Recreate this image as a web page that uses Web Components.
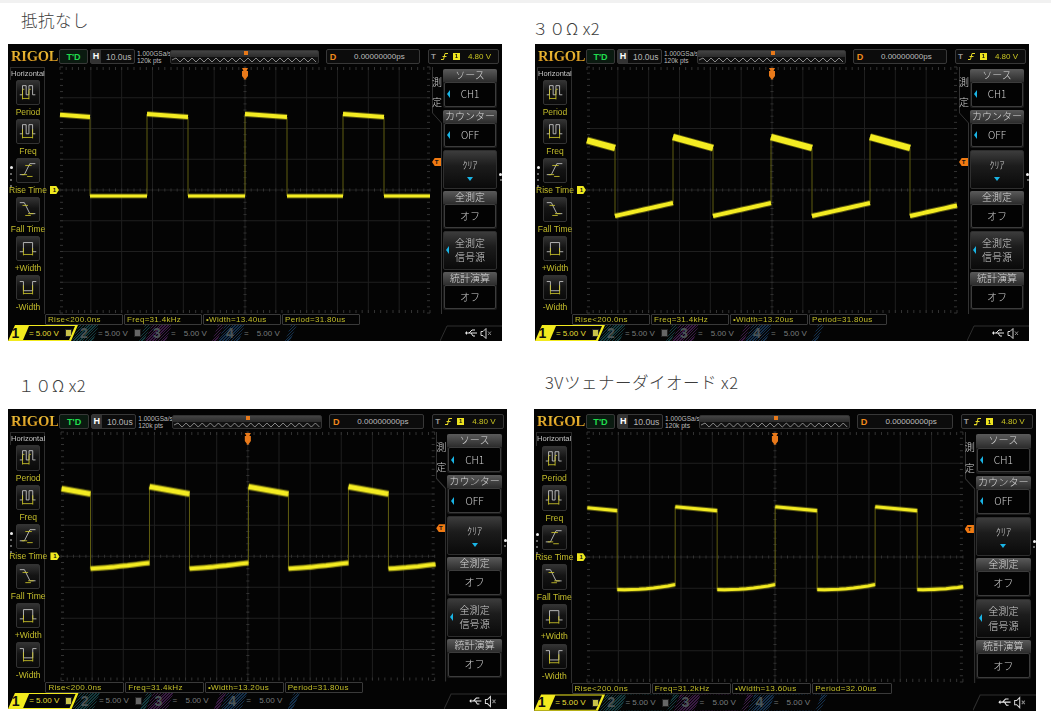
<!DOCTYPE html>
<html lang="ja">
<head>
<meta charset="utf-8">
<title>scope shots</title>
<style>
  html, body { margin: 0; background: #fff; }
  body { font-family: "Liberation Sans", "Noto Sans CJK JP", sans-serif; }
</style>
</head>
<body>
<shot-sheet>
  <scope-shot head="抵抗なし" head-x="13" head-top="7" left="8" head-h="41"
    ox="8" oy="44" z="1" freq="31.4kHz" pw="13.40us" period="31.80us"
    plot-x="60" plot-end="430" edges="90 147 188 245 287 343 384" hi="114 117 5" lo="196 196 196 4"></scope-shot>
  <scope-shot head="３０Ω x2" head-x="-3" head-top="15" left="535" head-h="41"
    ox="535" oy="44" z="1" freq="31.4kHz" pw="13.20us" period="31.80us"
    plot-x="587" plot-end="957" edges="615 673 713 771 812 870 910" hi="137 148 7" lo="216 209.500 203 5"></scope-shot>
  <scope-shot head="１０Ω x2" head-x="10" head-top="34" left="8" head-h="68"
    ox="8" oy="409" z="1.01" freq="31.4kHz" pw="13.20us" period="31.80us"
    plot-x="61" plot-end="435" edges="90 149 189 248 288 348 388" hi="487 494 6" lo="569 566.500 563 5"></scope-shot>
  <scope-shot head="3Vツェナーダイオード x2" head-x="11" head-top="31" left="534" head-h="68"
    ox="534" oy="409" z="1.016" freq="31.2kHz" pw="13.60us" period="32.00us"
    plot-x="587" plot-end="963" edges="617 675 717 775 817 875 917" hi="507 511 4" lo="590 589 585 4"></scope-shot>
</shot-sheet>

<script>
const LCD_FONT = '"Liberation Sans", "Noto Sans CJK JP", sans-serif';

class ShotSheet extends HTMLElement {
  constructor() {
    super();
    this.attachShadow({ mode: "open" });
    this.shadowRoot.innerHTML = `
      <style>
        :host {
          display: grid;
          grid-template-columns: 526px 525px;
          width: 1051px;
          height: 720px;
          box-sizing: border-box;
          align-content: start;
          border-top: 3px solid #f1f1f1;
          overflow: hidden;
        }
      </style>
      <slot></slot>`;
  }
}

class ScopeShot extends HTMLElement {
  constructor() {
    super();
    this.attachShadow({ mode: "open" });
  }

  connectedCallback() {
    const attr = (n) => this.getAttribute(n);
    const pad = Number(attr("left")) - (Number(attr("left")) > 500 ? 526 : 0);
    this.shadowRoot.innerHTML = `
      <style>
        :host { display: block; padding-left: ${pad}px; }
        .head {
          height: ${attr("head-h")}px;
          box-sizing: border-box;
          margin-left: ${attr("head-x")}px;
          padding-top: ${attr("head-top")}px;
          font: 300 16.5px/20px "Noto Sans CJK JP", sans-serif;
          letter-spacing: .5px;
          color: #3c3c3c;
          white-space: nowrap;
        }
        rigol-scope { zoom: ${attr("z")}; }
      </style>
      <div class="head">${attr("head")}</div>
      <rigol-scope></rigol-scope>`;
    const scope = this.shadowRoot.querySelector("rigol-scope");
    for (const n of ["ox", "oy", "z", "freq", "pw", "period", "plot-x", "plot-end", "edges", "hi", "lo"]) {
      scope.setAttribute(n, attr(n));
    }
  }
}

class SideKey extends HTMLElement {
  constructor() {
    super();
    this.attachShadow({ mode: "open" });
    this.shadowRoot.innerHTML = `
      <style>
        :host {
          display: flex;
          flex-direction: column;
          align-items: center;
          width: 44px;
          height: 40.2px;
          font-size: 8.5px;
          color: #c4bd2c;
          white-space: nowrap;
        }
        .btn {
          width: 24px;
          height: 25px;
          box-sizing: border-box;
          border: 1px solid #333;
          border-radius: 2px;
          background: linear-gradient(#333, #141414 45%, #0a0a0a);
          flex: none;
        }
        .lbl { line-height: 12px; margin-top: 1px; }
        ::slotted(svg) { display: block; }
      </style>
      <div class="btn"><slot name="icon"></slot></div>
      <div class="lbl"><slot></slot></div>`;
  }
}

class SoftKey extends HTMLElement {
  constructor() {
    super();
    this.attachShadow({ mode: "open" });
  }

  connectedCallback() {
    const head = this.getAttribute("head");
    const arrow = this.hasAttribute("arrow") ? `<i class="arrow"></i>` : "";
    const down = this.hasAttribute("down") ? `<i class="down"></i>` : "";
    const top = head ? `<div class="top">${head}</div>` : "";
    this.shadowRoot.innerHTML = `
      <style>
        :host {
          display: flex;
          flex-direction: column;
          height: 38.5px;
          width: 54px;
          box-sizing: border-box;
          border-radius: 2px;
          background: ${head ? "#1b1b1b" : "linear-gradient(#3c3c3c, #1c1c1c 40%, #0a0a0a)"};
          border: ${head ? "0" : "1px solid #2e2e2e"};
          color: #cfcfcf;
          font-family: "Noto Sans CJK JP", "Liberation Sans", sans-serif;
          font-weight: 300;
          flex: none;
        }
        .top {
          height: 13px;
          flex: none;
          line-height: 12px;
          font-size: 10px;
          text-align: center;
          background: linear-gradient(#5a5a5a, #2c2c2c);
          border-radius: 2px 2px 0 0;
          color: #d8d8d8;
          white-space: nowrap;
        }
        .body {
          flex: 1;
          position: relative;
          display: flex;
          align-items: center;
          justify-content: center;
          flex-direction: column;
          margin: ${head ? "0 1px 1px" : "0"};
          background: ${head ? "#030303" : "transparent"};
          border: ${head ? "1px solid #3c3c3c" : "0"};
          border-radius: 2px;
          font-size: 10px;
          line-height: 14px;
          text-align: center;
        }
        .arrow {
          position: absolute;
          left: 2px;
          top: 50%;
          margin-top: -4px;
          border: 4px solid transparent;
          border-left: 0;
          border-right: 3px solid #19b5e6;
        }
        .down {
          margin-top: 5px;
          border: 3.5px solid transparent;
          border-bottom: 0;
          border-top: 4px solid #19b5e6;
        }
      </style>
      ${top}
      <div class="body">${arrow}<span><slot></slot></span>${down}</div>`;
  }
}

class ChannelTab extends HTMLElement {
  constructor() {
    super();
    this.attachShadow({ mode: "open" });
  }

  connectedCallback() {
    const n = this.getAttribute("n");
    const tone = this.getAttribute("tone");
    const on = this.hasAttribute("on");
    this.shadowRoot.innerHTML = `
      <style>
        :host {
          display: flex;
          align-items: center;
          width: ${this.getAttribute("w")}px;
          margin-right: -6px;
          height: 16px;
          flex: none;
          box-sizing: border-box;
          clip-path: polygon(7px 0, 100% 0, calc(100% - 7px) 100%, 0 100%);
          background: ${on ? "#f2ea1e" : `repeating-linear-gradient(135deg, ${tone} 0 1px, #060606 1px 2px)`};
        }
        .num {
          width: ${on ? 15 : 18}px;
          flex: none;
          text-align: center;
          font: bold 14px/16px "Liberation Sans", sans-serif;
          color: ${on ? "#111" : "#4a5456"};
          padding-left: ${on ? 0 : 3}px;
        }
        .lcd {
          flex: 1;
          min-width: 0;
          height: ${on ? 14 : 16}px;
          margin-right: ${on ? 3 : 6}px;
          display: flex;
          align-items: center;
          gap: 2px;
          background: #050505;
          clip-path: polygon(6px 0, 100% 0, calc(100% - 6px) 100%, 0 100%);
          padding-left: ${on ? 6 : 5}px;
          font-size: 8px;
          color: ${on ? "#e6df35" : "#777b7c"};
          white-space: nowrap;
        }
        .eq { font-size: 8px; margin-right: ${n > 2 ? 6 : 0}px; }
        .bw {
          width: 5px; height: 6px; margin-left: 4px; flex: none;
          background: ${on ? "#c8c24a" : "#666"};
          border: 1px solid #222;
        }
      </style>
      <div class="num">${n}</div>
      <div class="lcd"><span class="eq">=</span><span>5.00 V</span>${n <= 2 ? '<span class="bw"></span>' : ""}</div>`;
  }
}

class ScopePlot extends HTMLElement {
  constructor() {
    super();
    this.attachShadow({ mode: "open" });
  }

  connectedCallback() {
    const num = (n) => Number(this.getAttribute(n));
    const list = (n) => this.getAttribute(n).split(" ").map(Number);
    const ox = num("ox"), oy = num("oy"), z = num("z");
    const X = (x) => ((x - ox) / z - 52).toFixed(1);
    const Y = (y) => ((y - oy) / z - 23).toFixed(1);
    const W = 370, H = 246, dx = W / 12, dy = H / 8;

    // grid and tick marks
    let grid = "";
    for (let i = 1; i < 12; i++) grid += `M${i * dx} 0V${H}`;
    for (let i = 1; i < 8; i++) grid += `M0 ${i * dy}H${W}`;
    let ticks = "";
    for (let i = 0; i <= 60; i++) {
      const x = (i * dx) / 5;
      ticks += `M${x} 0v3M${x} ${H}v-3M${x} ${H / 2 - 1.5}v3`;
    }
    for (let i = 0; i <= 40; i++) {
      const y = (i * dy) / 5;
      ticks += `M0 ${y}h3M${W} ${y}h-3M${W / 2 - 1.5} ${y}h3`;
    }

    // waveform: page coordinates, turned into plot coordinates here
    const edges = list("edges");
    const [ha, hb, ht] = list("hi");
    const [la, lm, lb, lt] = list("lo");
    const start = num("plot-x"), end = num("plot-end");
    const lowSpan = edges[1] - edges[0];
    const highSpan = edges[2] - edges[1];
    const slope = (hb - ha) / highSpan;
    const lowAt = (t) => {
      const c = 2 * (la + lb - 2 * lm);
      const b = lb - la - c;
      return la + b * t + c * t * t;
    };
    let high = `M${X(start)} ${Y(hb - slope * (edges[0] - start))}L${X(edges[0])} ${Y(hb)}`;
    let low = "";
    let vert = `M${X(edges[0])} ${Y(hb)}V${Y(la)}`;
    for (let i = 0; i < edges.length; i += 2) {
      const from = edges[i];
      const to = i + 1 < edges.length ? edges[i + 1] : end;
      const span = i + 1 < edges.length ? to - from : lowSpan;
      low += `M${X(from)} ${Y(la)}`;
      for (let s = 1; s <= 8; s++) {
        const x = from + ((to - from) * s) / 8;
        low += `L${X(x)} ${Y(lowAt((x - from) / span))}`;
      }
      if (i + 2 < edges.length) {
        high += `M${X(to)} ${Y(ha)}L${X(edges[i + 2])} ${Y(hb)}`;
        vert += `M${X(to)} ${Y(lb)}V${Y(ha)}M${X(edges[i + 2])} ${Y(hb)}V${Y(la)}`;
      }
    }

    this.shadowRoot.innerHTML = `
      <style>
        :host { display: block; width: ${W}px; height: ${H}px; flex: none; position: relative; }
        svg { display: block; overflow: visible; }
        .soft { filter: blur(.5px); }
        .tag {
          position: absolute;
          font: bold 6px/8px "Liberation Sans", sans-serif;
          height: 8px;
          width: 9px;
          text-align: center;
          color: #111;
        }
        .ch { left: -10px; top: ${H / 2 - 4}px; background: #f0e81f; clip-path: polygon(0 0, 70% 0, 100% 50%, 70% 100%, 0 100%); }
        .trig { left: ${W + 2}px; top: 91px; background: #f07a12; clip-path: polygon(30% 0, 100% 0, 100% 100%, 30% 100%, 0 50%); }
      </style>
      <svg width="${W}" height="${H}" viewBox="0 0 ${W} ${H}">
        <path d="${grid}" stroke="#1f1f1f" fill="none"/>
        <path d="${ticks}" stroke="#333" fill="none"/>
        <path d="M${W / 2 - 3} 1h6l-1.500 3h1.500v5l-3 4l-3 -4v-5h1.500z" fill="#e8791a"/>
        <path d="${vert}" stroke="#5f5c10" fill="none"/>
        <g class="soft">
          <path d="${low}" stroke="#bdb71c" stroke-width="${lt + 1}" fill="none" opacity=".45"/>
          <path d="${high}" stroke="#bdb71c" stroke-width="${ht + 1}" fill="none" opacity=".45"/>
          <path d="${low}" stroke="#f4ec22" stroke-width="${lt - 1}" fill="none"/>
          <path d="${high}" stroke="#f4ec22" stroke-width="${ht - 1}" fill="none"/>
        </g>
      </svg>
      <div class="tag ch">1</div>
      <div class="tag trig">T</div>`;
  }
}

const ICON_PATHS = {
  period: ["M3 15H6V5H10V15H13V5H17V15H20", "M6 10V20M13 10V20M6 19H13M6 9H8M13 9H15"],
  freq: ["M3 15H6V5H10V15H13V5H17V15H20", "M6 10V20M17 10V20M6 19H17"],
  rise: ["M3 17H8L14 5H20", "M5 17H11M9 7H16M11 19H17"],
  fall: ["M3 5H8L14 17H20", "M6 8H12M9 19H15M12 17H18"],
  plus: ["M3 16H7V6H17V16H21", "M7 12V20M17 12V20M7 19H17"],
  minus: ["M3 6H7V16H17V6H21", "M7 10V20M17 10V20M7 19H17"],
};
const icon = (name) => {
  const [white, yellow] = ICON_PATHS[name];
  return `<svg slot="icon" width="22" height="23" viewBox="0 0 24 25" fill="none">
    <path d="${white}" stroke="#cfcfcf" stroke-width=".9"/>
    <path d="${yellow}" stroke="#d0c82a" stroke-width=".9"/></svg>`;
};

class RigolScope extends HTMLElement {
  constructor() {
    super();
    this.attachShadow({ mode: "open" });
  }

  connectedCallback() {
    const a = (n) => this.getAttribute(n);
    const plotAttrs = ["ox", "oy", "z", "plot-x", "plot-end", "edges", "hi", "lo"]
      .map((n) => `${n}="${a(n)}"`)
      .join(" ");
    this.shadowRoot.innerHTML = `
      <style>
        :host {
          display: flex;
          flex-direction: column;
          position: relative;
          width: 494px;
          height: 297px;
          background: #040404;
          font-family: ${LCD_FONT};
          color: #ccc;
          filter: blur(.35px);
        }
        .bar { display: flex; align-items: center; height: 23px; flex: none; padding: 3px 0 1px 3px; box-sizing: border-box; }
        .logo {
          width: 47px; flex: none;
          font: bold 14.500px/15px "Liberation Serif", serif;
          letter-spacing: -.2px;
          background: linear-gradient(#f4c83c, #d08d1c);
          -webkit-background-clip: text;
          color: transparent;
          white-space: nowrap;
        }
        .box {
          display: flex; align-items: center; height: 15px; box-sizing: border-box;
          border: 1px solid #383838; border-radius: 2px; background: #0c0c0c; flex: none;
          font-size: 8px;
        }
        .td { width: 29px; margin-left: 1px; justify-content: center; color: #20dd4e; font-weight: bold; font-size: 9px; background: #0a1a10; }
        .h { width: 45px; margin-left: 2px; }
        .h b { background: #333; color: #fff; width: 10px; height: 13px; line-height: 13px; text-align: center; font-size: 9px; }
        .h span { margin-left: 5px; color: #b5b5b5; font-size: 8.500px; }
        .rate { width: 33px; margin-left: 2px; font-size: 6.5px; line-height: 7px; color: #bdbdbd; flex: none; white-space: nowrap; }
        .mem { width: 149px; height: 14px; position: relative; background: linear-gradient(#444, #2a2a2a 50%, #111 50%); border: 1px solid #333; box-sizing: border-box; border-radius: 2px; flex: none; }
        .mem svg { display: block; margin: 6px 0 0 1px; }
        .mem i { position: absolute; left: 73px; top: 0; width: 4px; height: 4px; background: #e8791a; }
        .d { width: 94px; margin-left: 7px; }
        .d b { color: #f08a1c; font-size: 9px; width: 12px; text-align: center; }
        .d span { margin-left: 15px; color: #bdbdbd; }
        .t { width: 71px; margin-left: 8px; gap: 5px; padding-left: 2px; color: #c9c422; }
        .t b { color: #9a9a9a; font-size: 8px; }
        .t em { font: bold 6px/7px "Liberation Sans", sans-serif; color: #111; background: #eee41f; width: 7px; height: 7px; text-align: center; }
        .t span { margin-left: 3px; }

        .mid { display: flex; height: 247px; flex: none; }
        .left {
          width: 52px; flex: none; display: flex; flex-direction: column;
          box-sizing: border-box; padding-left: 0;
        }
        .hz { width: 35px; margin-left: 2px; height: 13px; line-height: 11px; text-align: center; font-size: 7.5px; color: #c5c5c5; border: 1px solid #2a2a2a; border-bottom: 0; box-sizing: border-box; flex: none; white-space: nowrap; }
        .keys { display: flex; flex-direction: column; border-right: 1px solid #2e2e2e; width: 37px; height: 234px; box-sizing: border-box; }
        .keys side-key { margin-left: -2px; }
        .dots { position: absolute; left: 2px; top: 122px; display: flex; flex-direction: column; gap: 4px; }
        .dots i, .rdots i { display: block; width: 2px; height: 2px; border-radius: 50%; background: #888; }
        .dots i:first-child, .rdots i:first-child { background: #eee; width: 3px; height: 3px; }
        .right { width: 72px; flex: none; display: flex; position: relative; box-sizing: border-box; padding: 2px 0 0 13px; }
        .frame { position: absolute; left: 2px; top: 0; }
        .meas { position: absolute; left: 2px; top: 5px; width: 10px; font: 300 10px/20px "Noto Sans CJK JP", sans-serif; color: #d4d4d4; }
        .softs { display: flex; flex-direction: column; gap: 2px; }
        .rdots { position: absolute; left: 69px; top: 106px; display: flex; flex-direction: column; gap: 3px; align-items: center; }

        .measures { display: flex; height: 11px; flex: none; padding-left: 37px; gap: 1px; box-sizing: border-box; }
        .measures span {
          width: 78px; flex: none; box-sizing: border-box; border: 1px solid #3a3a3a; border-radius: 1px;
          font-size: 8px; line-height: 9px; padding-left: 2px; color: #c4bf2a; letter-spacing: .3px; white-space: nowrap;
        }
        .channels { display: flex; height: 16px; flex: none; align-items: center; position: relative; }
        .status { position: absolute; right: 0; top: 0; width: 62px; height: 16px; }
      </style>

      <div class="bar">
        <div class="logo">RIGOL</div>
        <div class="box td">T'D</div>
        <div class="box h"><b>H</b><span>10.0us</span></div>
        <div class="rate">1.000GSa/s<br>120k pts</div>
        <div class="mem"><i></i><svg width="146" height="6"><path d="${zigzag()}" fill="none" stroke="#bbb" stroke-width=".7"/></svg></div>
        <div class="box d"><b>D</b><span>0.00000000ps</span></div>
        <div class="box t"><b>T</b>
          <svg width="7" height="9" viewBox="0 0 7 9" fill="none"><path d="M0 7.5H2.5L4 1.5H7M1.5 4.5H5.5" stroke="#e6d926"/></svg>
          <em>1</em><span>4.80 V</span></div>
      </div>

      <div class="mid">
        <div class="left">
          <div class="hz">Horizontal</div>
          <div class="keys">
            <side-key>${icon("period")}Period</side-key>
            <side-key>${icon("freq")}Freq</side-key>
            <side-key>${icon("rise")}Rise Time</side-key>
            <side-key>${icon("fall")}Fall Time</side-key>
            <side-key>${icon("plus")}+Width</side-key>
            <side-key>${icon("minus")}-Width</side-key>
          </div>
        </div>
        <scope-plot ${plotAttrs}></scope-plot>
        <div class="right">
          <svg class="frame" width="70" height="247" fill="none"><path d="M.5 0V46L9.500 56V247" stroke="#333"/></svg>
          <div class="meas">測<br>定</div>
          <div class="softs">
            <soft-key head="ソース" arrow>CH1</soft-key>
            <soft-key head="カウンター" arrow>OFF</soft-key>
            <soft-key down>ｸﾘｱ</soft-key>
            <soft-key head="全測定">オフ</soft-key>
            <soft-key arrow>全測定<br>信号源</soft-key>
            <soft-key head="統計演算">オフ</soft-key>
          </div>
          <div class="rdots"><i></i><i></i></div>
        </div>
      </div>

      <div class="measures">
        <span>Rise&lt;200.0ns</span>
        <span>Freq=${a("freq")}</span>
        <span>•Width=${a("pw")}</span>
        <span>Period=${a("period")}</span>
      </div>

      <div class="channels">
        <channel-tab n="1" on w="70"></channel-tab>
        <channel-tab n="2" tone="#143c40" w="79"></channel-tab>
        <channel-tab n="3" tone="#3a1a44" w="79"></channel-tab>
        <channel-tab n="4" tone="#14304c" w="79"></channel-tab>
        <svg class="status" viewBox="0 0 62 16" fill="none">
          <path d="M0 16L7 1H62" stroke="#2e2e2e"/>
          <path d="M26 8H37M29 8l3-3h3M31 8l2 3h2" stroke="#e8e8e8"/>
          <path d="M25 8l2-2v4z" fill="#e8e8e8"/>
          <path d="M41 6.500h2l3-3v10l-3-3h-2z" stroke="#d4d4d4"/>
          <path d="M48 6.500l3 3.500M51 6.500l-3 3.500" stroke="#888"/>
        </svg>
      </div>
      <div class="dots"><i></i><i></i><i></i><i></i></div>`;
  }
}

function zigzag() {
  let d = "M0 3";
  for (let x = 4, up = true; x <= 146; x += 4, up = !up) d += `L${x} ${up ? 1 : 5}`;
  return d;
}

customElements.define("shot-sheet", ShotSheet);
customElements.define("scope-shot", ScopeShot);
customElements.define("side-key", SideKey);
customElements.define("soft-key", SoftKey);
customElements.define("channel-tab", ChannelTab);
customElements.define("scope-plot", ScopePlot);
customElements.define("rigol-scope", RigolScope);
</script>
</body>
</html>
